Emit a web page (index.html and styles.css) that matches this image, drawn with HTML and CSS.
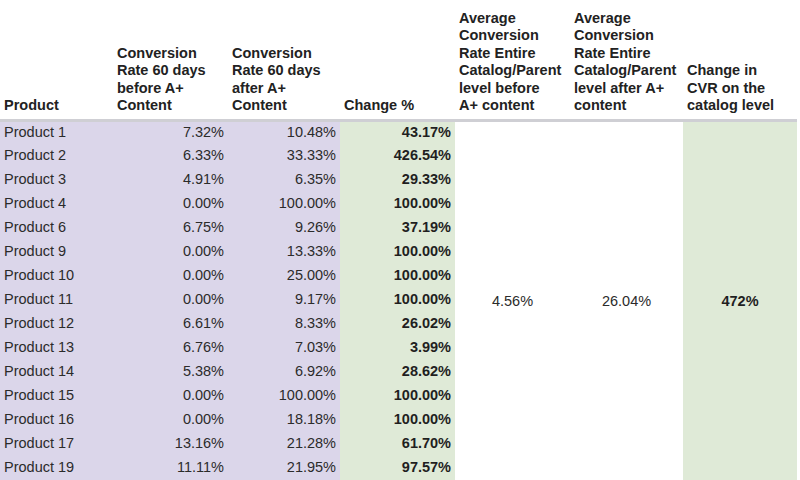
FILE: index.html
```html
<!DOCTYPE html>
<html lang="en">
<head>
<meta charset="utf-8">
<title>Conversion Rate Table</title>
<link rel="stylesheet" href="styles.css">
</head>
<body>
<table class="cvr">
  <colgroup>
    <col class="c1"><col class="c2"><col class="c3"><col class="c4"><col class="c5"><col class="c6"><col class="c7">
  </colgroup>
  <thead>
    <tr>
      <th>Product</th>
      <th>Conversion<br>Rate 60 days<br>before A+<br>Content</th>
      <th>Conversion<br>Rate 60 days<br>after A+<br>Content</th>
      <th>Change %</th>
      <th>Average<br>Conversion<br>Rate Entire<br>Catalog/Parent<br>level before<br>A+ content</th>
      <th>Average<br>Conversion<br>Rate Entire<br>Catalog/Parent<br>level after A+<br>content</th>
      <th>Change in<br>CVR on the<br>catalog level</th>
    </tr>
  </thead>
  <tbody>
    <tr><td class="p">Product 1</td><td class="p num">7.32%</td><td class="p num">10.48%</td><td class="g num b">43.17%</td>
      <td class="avg" rowspan="15">4.56%</td><td class="avg" rowspan="15">26.04%</td><td class="avg g b" rowspan="15">472%</td></tr>
    <tr><td class="p">Product 2</td><td class="p num">6.33%</td><td class="p num">33.33%</td><td class="g num b">426.54%</td></tr>
    <tr><td class="p">Product 3</td><td class="p num">4.91%</td><td class="p num">6.35%</td><td class="g num b">29.33%</td></tr>
    <tr><td class="p">Product 4</td><td class="p num">0.00%</td><td class="p num">100.00%</td><td class="g num b">100.00%</td></tr>
    <tr><td class="p">Product 6</td><td class="p num">6.75%</td><td class="p num">9.26%</td><td class="g num b">37.19%</td></tr>
    <tr><td class="p">Product 9</td><td class="p num">0.00%</td><td class="p num">13.33%</td><td class="g num b">100.00%</td></tr>
    <tr><td class="p">Product 10</td><td class="p num">0.00%</td><td class="p num">25.00%</td><td class="g num b">100.00%</td></tr>
    <tr><td class="p">Product 11</td><td class="p num">0.00%</td><td class="p num">9.17%</td><td class="g num b">100.00%</td></tr>
    <tr><td class="p">Product 12</td><td class="p num">6.61%</td><td class="p num">8.33%</td><td class="g num b">26.02%</td></tr>
    <tr><td class="p">Product 13</td><td class="p num">6.76%</td><td class="p num">7.03%</td><td class="g num b">3.99%</td></tr>
    <tr><td class="p">Product 14</td><td class="p num">5.38%</td><td class="p num">6.92%</td><td class="g num b">28.62%</td></tr>
    <tr><td class="p">Product 15</td><td class="p num">0.00%</td><td class="p num">100.00%</td><td class="g num b">100.00%</td></tr>
    <tr><td class="p">Product 16</td><td class="p num">0.00%</td><td class="p num">18.18%</td><td class="g num b">100.00%</td></tr>
    <tr><td class="p">Product 17</td><td class="p num">13.16%</td><td class="p num">21.28%</td><td class="g num b">61.70%</td></tr>
    <tr><td class="p">Product 19</td><td class="p num">11.11%</td><td class="p num">21.95%</td><td class="g num b">97.57%</td></tr>
  </tbody>
</table>
</body>
</html>
```
FILE: styles.css
```css
html, body {
  margin: 0;
  padding: 0;
  background: #ffffff;
}

body {
  font-family: "Liberation Sans", Arial, sans-serif;
  color: #2b2b2b;
  overflow: hidden;
}

.cvr {
  border-collapse: collapse;
  table-layout: fixed;
  width: 797px;
}

.c1 { width: 113px; }
.c2 { width: 115px; }
.c3 { width: 112px; }
.c4 { width: 115px; }
.c5 { width: 115px; }
.c6 { width: 113px; }
.c7 { width: 114px; }

.cvr th {
  height: 120px;
  box-sizing: border-box;
  padding: 0 0 4px 4px;
  vertical-align: bottom;
  text-align: left;
  font-size: 14.5px;
  line-height: 17.5px;
  font-weight: bold;
  color: #222222;
  white-space: nowrap;
  border-bottom: 3px solid #cfcfd4;
}

.cvr td {
  height: 24px;
  box-sizing: border-box;
  padding: 0 4px 2px 4px;
  font-size: 14.5px;
  line-height: 18px;
  white-space: nowrap;
  vertical-align: middle;
}

.p { background: #dbd6ea; }
.g { background: #dfead7; }
.num { text-align: right; }
.b { font-weight: bold; color: #1f1f1f; }

.cvr td.avg {
  text-align: center;
  vertical-align: middle;
  padding: 0;
}
```
